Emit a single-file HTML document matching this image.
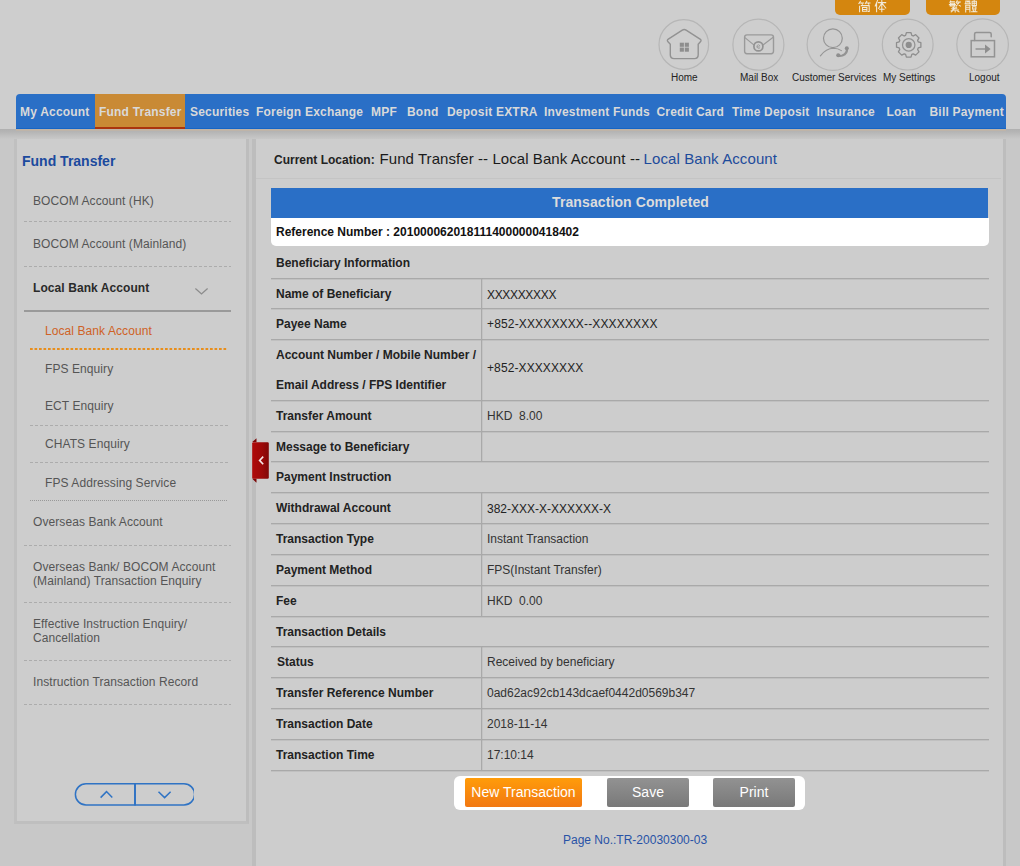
<!DOCTYPE html>
<html><head><meta charset="utf-8">
<style>
*{margin:0;padding:0;box-sizing:border-box}
html,body{width:1020px;height:866px;overflow:hidden;background:#c8c8c8;font-family:"Liberation Sans",sans-serif;position:relative}
.a{position:absolute;white-space:nowrap}
.lang{position:absolute;top:0;height:15px;background:#d4860f;border-radius:0 0 5px 5px}
.ic{position:absolute;top:19px;width:51px;height:51px;border:1px solid #b4b4b4;border-radius:50%}
.ilbl{position:absolute;top:72px;font-size:10px;line-height:12px;color:#222;text-align:center}
#nav{position:absolute;left:16px;top:94px;width:990px;height:35px;background:#2a6fc6;border-bottom:1px solid #1565c6;border-radius:4px 4px 0 0}
.nv{position:absolute;top:105px;font-size:12px;line-height:14px;font-weight:bold;color:#d9d9d9;letter-spacing:0.2px}
#shade{position:absolute;left:0;top:129px;width:1020px;height:10px;background:linear-gradient(#b0b0b0 0,#b4b4b4 25%,#bcbcbc 55%,#c8c8c8 100%)}
#tan{position:absolute;left:16px;top:129px;width:990px;height:1.5px;background:#bfb4a8}
#left{position:absolute;left:14px;top:139px;width:235px;height:685px;background:#cdcdcd;border-left:3px solid #c0c0c0;border-right:3px solid #bdbdbd;border-bottom:3px solid #bfbfbf}
#main{position:absolute;left:252px;top:139px;width:754px;height:727px;background:#cdcdcd;border-left:4px solid #bdbdbd;border-right:3px solid #bdbdbd}
.sb{position:absolute;font-size:12px;line-height:14px;color:#555;letter-spacing:0.08px}
.dash{position:absolute;height:1px;background-image:linear-gradient(to right,#acacac 60%,transparent 60%);background-size:5px 1px}
.lbl{position:absolute;left:276px;font-size:12px;line-height:14px;font-weight:bold;color:#222}
.val{position:absolute;left:487px;font-size:12px;line-height:14px;color:#333}
.hl{position:absolute;left:271px;width:718px;height:1px;background:#a9a9a9;box-shadow:0 0.7px 0 rgba(165,165,165,0.45)}
.vl{position:absolute;left:481px;width:1px;background:#a9a9a9;box-shadow:0.6px 0 0 rgba(165,165,165,0.4)}
</style></head><body>

<div class="a" style="left:0;top:0;width:1020px;height:129px;background:#cecece"></div>
<!-- language buttons -->
<div class="lang" style="left:835px;width:75px"></div>
<div class="lang" style="left:926px;width:74px"></div>

<svg class="a" style="left:840px;top:0" width="180" height="16" viewBox="840 0 180 16">
<g fill="none" stroke="#f2ead9" stroke-width="1.05" stroke-linecap="square">
<path d="M858.9,3.6 L860.4,1.3 M859.6,2.9 L863.5,2.9 M861.6,3 L862.4,4.2 M865.3,3.6 L866.8,1.3 M866,2.9 L870,2.9 M868,3 L868.8,4.2"/>
<path d="M859.6,6.3 L859.6,11.8 M861.3,5.6 L869.2,5.6 L869.2,11.5 L868.3,11.5 M862.5,7.5 L866.9,7.5 L866.9,11.3 L862.5,11.3 Z M862.5,9.4 L866.9,9.4"/>
<path d="M877.5,0.6 L875.2,6 M876.6,3.8 L876.6,11.8 M878.3,2.6 L885.7,2.6 M881.8,0.5 L881.8,11.8 M881.5,3.4 L878.5,8.4 M882.1,3.4 L885.8,8 M879.6,9.3 L884.1,9.3"/>
<path d="M950.6,1 L949.9,2.4 M950.5,1.8 L954.4,1.8 M950.4,3.2 L954.6,3.2 L954.3,6 M950.6,3.2 L950.6,6 M949.4,4.6 L955.4,4.6 M950.2,6 L954.8,6 M957.2,0.8 L956.2,2.8 M956.7,2 L960.4,2 M959.3,2.2 L956.2,6.1 M957.2,3.6 L960.4,6.1"/>
<path d="M954.2,6.8 L952.2,8.3 L956.8,8.3 M956.2,7.5 L952,10.1 L958.4,9.9 M955.2,9.9 L955.2,12 M952.6,10.9 L951.2,11.9 M957.4,10.9 L959,11.9"/>
<path d="M965.8,1 L969.8,1 L969.8,3 M965.8,1 L965.8,3 M967.3,2 L968.6,2 M965.1,3.8 L970.4,3.8 M965.7,5.2 L965.7,11.9 M965.7,5.2 L969.9,5.2 L969.9,11.9 M966.6,7.3 L969.1,7.3 M966.6,9.3 L969.1,9.3"/>
<path d="M972.1,1.2 L976.4,1.2 L976.4,5.4 L972.1,5.4 Z M974.2,0.6 L974.2,5.4 M972.1,3.3 L976.4,3.3 M972.6,6.8 L975.9,6.8 L975.9,9 L972.6,9 Z M973.1,10.1 L973.5,11 M975.4,10.1 L975,11 M971.6,11.8 L976.9,11.8"/>
</g></svg>
<!-- icons -->
<svg class="a" style="left:0;top:0" width="1020" height="92" viewBox="0 0 1020 92">
<g fill="none" stroke="#b6b6b6" stroke-width="1.2">
<circle cx="683.8" cy="44.5" r="24.8"/>
<circle cx="758.4" cy="44.7" r="25.5"/>
<circle cx="832.9" cy="44.6" r="25.8"/>
<circle cx="907.7" cy="44.6" r="25.4"/>
<circle cx="982.6" cy="44.6" r="25.8"/>
</g>
<g fill="none" stroke="#939393" stroke-width="1.6" stroke-linejoin="round" stroke-linecap="round">
<path d="M670.3,44.3 L668,41.8 Q666.6,40.3 668.3,39.2 L682.3,30.1 Q684.2,28.9 686.1,30.1 L700.1,39.2 Q701.8,40.3 700.4,41.8 L698.2,44.3 L698.2,54.8 Q698.2,58.6 694.4,58.6 L674.1,58.6 Q670.3,58.6 670.3,54.8 Z" stroke="#929292" stroke-width="1.4"/>
<rect x="744.6" y="34.9" width="28.9" height="18.8" rx="2.4" stroke="#9a9a9a" stroke-width="1.4"/>
<path d="M744.9,37.6 L753.8,44.9 M773.2,37.3 L763,44.9" stroke="#9a9a9a" stroke-width="1.2"/>
<circle cx="758.4" cy="46.4" r="4.5" stroke="#929292" stroke-width="1.7"/>
<path d="M756.9,46.9 L759.3,46.9 M759.9,45.6 Q758.6,43.9 757.2,45.4 Q756.5,47.6 758.2,48.3 Q759.3,48.6 759.9,47.9" stroke="#9a9a9a" stroke-width="0.9"/>
<circle cx="832.9" cy="38.3" r="9.4" stroke-width="1.2" stroke="#959595"/>
<path d="M820.4,55.8 Q826,48.3 833.5,48.2 Q838.2,48.3 841.4,50.6" stroke-width="1.1" stroke="#959595"/>
<path d="M846.9,48.4 Q847.6,53.6 842.4,55.5 Q839.8,56.2 838,55.5" stroke-width="2.3"/>
<path d="M905.61,35.39 L906.38,32.72 L911.02,32.72 L911.79,35.39 A10.0,10.0 0 0 1 913.24,35.99 L915.67,34.64 L918.96,37.93 L917.61,40.36 A10.0,10.0 0 0 1 918.21,41.81 L920.88,42.58 L920.88,47.22 L918.21,47.99 A10.0,10.0 0 0 1 917.61,49.44 L918.96,51.87 L915.67,55.16 L913.24,53.81 A10.0,10.0 0 0 1 911.79,54.41 L911.02,57.08 L906.38,57.08 L905.61,54.41 A10.0,10.0 0 0 1 904.16,53.81 L901.73,55.16 L898.44,51.87 L899.79,49.44 A10.0,10.0 0 0 1 899.19,47.99 L896.52,47.22 L896.52,42.58 L899.19,41.81 A10.0,10.0 0 0 1 899.79,40.36 L898.44,37.93 L901.73,34.64 L904.16,35.99 A10.0,10.0 0 0 1 905.61,35.39Z" stroke-width="1.3" stroke="#8e8e8e"/>
<circle cx="908.7" cy="44.9" r="6.2" stroke-width="1.3"/>
<rect x="971.2" y="40.6" width="23.3" height="16.2" stroke-width="1.5" stroke-linejoin="miter"/>
<path d="M974.6,40.6 L974.6,34 Q974.6,32.6 976.2,32.6 L989.6,32.6 Q991.2,32.6 991.2,34 L991.2,36.8" stroke-width="1.5"/>
<path d="M976,49 L986,49" stroke-width="1.3"/>
</g>
<g fill="#8e8e8e">
<rect x="679.8" y="42.7" width="4.1" height="4.1"/><rect x="684.8" y="42.7" width="4.1" height="4.1"/>
<rect x="679.8" y="47.6" width="4.1" height="4.1"/><rect x="684.8" y="47.6" width="4.1" height="4.1"/>
<circle cx="908.7" cy="44.9" r="3.1"/>
<circle cx="838.2" cy="55.2" r="2"/><circle cx="846.8" cy="48.2" r="2"/>
<path d="M985,44.6 L990.6,49 L985,53.4Z"/>
</g>
</svg>
<div class="ilbl a" style="left:671px">Home</div>
<div class="ilbl a" style="left:740px">Mail Box</div>
<div class="ilbl a" style="left:792px">Customer Services</div>
<div class="ilbl a" style="left:883px">My Settings</div>
<div class="ilbl a" style="left:969px">Logout</div>

<!-- nav -->
<div id="nav"></div>
<div class="a" style="left:95px;top:94px;width:90px;height:35px;background:#c98a35;border-bottom:2px solid #aa340e"></div>
<div class="nv a" style="left:20px">My Account</div>
<div class="nv a" style="left:99px">Fund Transfer</div>
<div class="nv a" style="left:190px">Securities</div>
<div class="nv a" style="left:256px">Foreign Exchange</div>
<div class="nv a" style="left:371px">MPF</div>
<div class="nv a" style="left:407px">Bond</div>
<div class="nv a" style="left:447px">Deposit EXTRA</div>
<div class="nv a" style="left:544px">Investment Funds</div>
<div class="nv a" style="left:656.5px">Credit Card</div>
<div class="nv a" style="left:732px">Time Deposit</div>
<div class="nv a" style="left:816.5px">Insurance</div>
<div class="nv a" style="left:886.5px">Loan</div>
<div class="nv a" style="left:929.5px">Bill Payment</div>
<div id="shade"></div><div id="tan"></div>

<!-- left panel -->
<div id="left"></div>
<div class="a" style="left:22px;top:153px;font-size:14px;line-height:16px;font-weight:bold;color:#1b4a9e">Fund Transfer</div>
<div class="sb a" style="left:33px;top:194px">BOCOM Account (HK)</div>
<div class="dash" style="left:24px;top:221px;width:207px"></div>
<div class="sb a" style="left:33px;top:237px">BOCOM Account (Mainland)</div>
<div class="dash" style="left:24px;top:266px;width:207px"></div>
<div class="sb a" style="left:33px;top:281px;font-weight:bold;color:#2a2a2a">Local Bank Account</div>
<div class="a" style="left:24px;top:310px;width:207px;height:2px;background:#9a9a9a"></div>
<div class="sb a" style="left:45px;top:324px;color:#cf6226">Local Bank Account</div>
<div class="dash" style="left:30px;top:348px;width:198px;height:2px;background-image:linear-gradient(to right,#e88e1c 66%,transparent 66%);background-size:4.5px 2px"></div>
<div class="sb a" style="left:45px;top:362px">FPS Enquiry</div>
<div class="sb a" style="left:45px;top:399px">ECT Enquiry</div>
<div class="dash" style="left:30px;top:425px;width:198px"></div>
<div class="sb a" style="left:45px;top:437px">CHATS Enquiry</div>
<div class="dash" style="left:30px;top:462px;width:198px"></div>
<div class="sb a" style="left:45px;top:476px">FPS Addressing Service</div>
<div class="dash" style="left:30px;top:500px;width:198px;background-size:2px 1px;background-image:linear-gradient(to right,#999 50%,transparent 50%)"></div>
<div class="sb a" style="left:33px;top:515px">Overseas Bank Account</div>
<div class="dash" style="left:24px;top:545px;width:207px"></div>
<div class="sb a" style="left:33px;top:560px">Overseas Bank/ BOCOM Account</div>
<div class="sb a" style="left:33px;top:574px">(Mainland) Transaction Enquiry</div>
<div class="dash" style="left:24px;top:602px;width:207px"></div>
<div class="sb a" style="left:33px;top:617px">Effective Instruction Enquiry/</div>
<div class="sb a" style="left:33px;top:631px">Cancellation</div>
<div class="dash" style="left:24px;top:660px;width:207px"></div>
<div class="sb a" style="left:33px;top:675px">Instruction Transaction Record</div>
<div class="dash" style="left:24px;top:704px;width:207px"></div>

<!-- main panel -->
<div id="main"></div>

<div class="a" style="left:274px;top:153px;font-size:12px;line-height:14px;font-weight:bold;color:#222">Current Location:</div>
<div class="a" style="left:379.5px;top:150px;font-size:15px;line-height:17px;color:#1a1a1a;letter-spacing:0.07px">Fund Transfer -- Local Bank Account</div>
<div class="a" style="left:630px;top:150px;font-size:15px;line-height:17px;color:#1a1a1a">--</div>
<div class="a" style="left:643.5px;top:150px;font-size:15px;line-height:17px;color:#1d4b9b;letter-spacing:0.1px">Local Bank Account</div>
<div class="a" style="left:256px;top:178px;width:745px;height:1px;background:#c4c4c4"></div>
<div class="a" style="left:271px;top:188px;width:717px;height:30px;background:#2a6fc6"></div>
<div class="a" style="left:272px;top:194px;width:717px;text-align:center;font-size:14px;line-height:17px;font-weight:bold;color:#dcdcdc;letter-spacing:0.1px">Transaction Completed</div>
<div class="a" style="left:271px;top:218px;width:718px;height:28px;background:#fff;border-radius:0 0 5px 5px"></div>
<div class="lbl a" style="top:225px;color:#111">Reference Number : 2010000620181114000000418402</div>
<div class="lbl a" style="top:256px">Beneficiary Information</div>
<div class="hl" style="top:278px"></div>
<div class="lbl a" style="top:287px">Name of Beneficiary</div>
<div class="val a" style="top:288px;letter-spacing:-0.33px;color:#222">XXXXXXXXX</div>
<div class="vl" style="top:278px;height:30px"></div>
<div class="hl" style="top:308px"></div>
<div class="lbl a" style="top:317px">Payee Name</div>
<div class="val a" style="top:316.5px;letter-spacing:0.15px;color:#222">+852-XXXXXXXX--XXXXXXXX</div>
<div class="vl" style="top:308px;height:31px"></div>
<div class="hl" style="top:339px"></div>
<div class="lbl a" style="top:348px">Account Number / Mobile Number /</div>
<div class="lbl a" style="top:378px">Email Address / FPS Identifier</div>
<div class="val a" style="top:361px;letter-spacing:0.1px;color:#222">+852-XXXXXXXX</div>
<div class="vl" style="top:339px;height:61px"></div>
<div class="hl" style="top:400px"></div>
<div class="lbl a" style="top:409px">Transfer Amount</div>
<div class="val a" style="top:409px">HKD&nbsp; 8.00</div>
<div class="vl" style="top:400px;height:31px"></div>
<div class="hl" style="top:431px"></div>
<div class="lbl a" style="top:440px">Message to Beneficiary</div>
<div class="val a" style="top:440px"></div>
<div class="vl" style="top:431px;height:30px"></div>
<div class="hl" style="top:461px"></div>
<div class="lbl a" style="top:470px">Payment Instruction</div>
<div class="hl" style="top:492px"></div>
<div class="lbl a" style="top:501px">Withdrawal Account</div>
<div class="val a" style="top:502px;color:#222">382-XXX-X-XXXXXX-X</div>
<div class="vl" style="top:492px;height:31px"></div>
<div class="hl" style="top:523px"></div>
<div class="lbl a" style="top:532px">Transaction Type</div>
<div class="val a" style="top:532px">Instant Transaction</div>
<div class="vl" style="top:523px;height:31px"></div>
<div class="hl" style="top:554px"></div>
<div class="lbl a" style="top:563px">Payment Method</div>
<div class="val a" style="top:563px">FPS(Instant Transfer)</div>
<div class="vl" style="top:554px;height:31px"></div>
<div class="hl" style="top:585px"></div>
<div class="lbl a" style="top:594px">Fee</div>
<div class="val a" style="top:594px">HKD&nbsp; 0.00</div>
<div class="vl" style="top:585px;height:31px"></div>
<div class="hl" style="top:616px"></div>
<div class="lbl a" style="top:625px">Transaction Details</div>
<div class="hl" style="top:646px"></div>
<div class="lbl a" style="top:655px;left:277px">Status</div>
<div class="val a" style="top:655px">Received by beneficiary</div>
<div class="vl" style="top:646px;height:31px"></div>
<div class="hl" style="top:677px"></div>
<div class="lbl a" style="top:686px">Transfer Reference Number</div>
<div class="val a" style="top:686px">0ad62ac92cb143dcaef0442d0569b347</div>
<div class="vl" style="top:677px;height:31px"></div>
<div class="hl" style="top:708px"></div>
<div class="lbl a" style="top:717px">Transaction Date</div>
<div class="val a" style="top:717px">2018-11-14</div>
<div class="vl" style="top:708px;height:31px"></div>
<div class="hl" style="top:739px"></div>
<div class="lbl a" style="top:748px">Transaction Time</div>
<div class="val a" style="top:748px">17:10:14</div>
<div class="vl" style="top:739px;height:31px"></div>
<div class="hl" style="top:770px"></div>
<div class="a" style="left:454px;top:776px;width:351px;height:34px;background:#fff;border-radius:6px"></div>
<div class="a" style="left:465px;top:778px;width:117px;height:29px;background:linear-gradient(#ff9c0a,#f27812);border-radius:2px;color:#fff;font-size:14px;line-height:28px;text-align:center">New Transaction</div>
<div class="a" style="left:607px;top:778px;width:82px;height:29px;background:linear-gradient(#929292,#797979);border-radius:2px;color:#fff;font-size:14px;line-height:28px;text-align:center">Save</div>
<div class="a" style="left:713px;top:778px;width:82px;height:29px;background:linear-gradient(#929292,#797979);border-radius:2px;color:#fff;font-size:14px;line-height:28px;text-align:center">Print</div>
<div class="a" style="left:563px;top:833px;font-size:12px;line-height:14px;color:#2852a6">Page No.:TR-20030300-03</div>

<!-- collapse tab -->
<svg class="a" style="left:250px;top:436px" width="22" height="50" viewBox="250 436 22 50">
<defs><linearGradient id="rg" x1="0" x2="1"><stop offset="0" stop-color="#b00a0a"/><stop offset="0.6" stop-color="#9c0a0a"/><stop offset="1" stop-color="#800808"/></linearGradient></defs>
<path d="M252.2,442 L256.5,438.2 L256.5,442Z M252.2,478.8 L256.5,482.8 L256.5,478.8Z" fill="#7a0606"/>
<rect x="252.2" y="442.2" width="16.6" height="36.6" rx="1.2" fill="url(#rg)"/>
<path d="M263.2,456.6 L259.6,460.4 L263.2,464.2" fill="none" stroke="#f4e8e8" stroke-width="1.6"/>
</svg>
<!-- up/down pill -->
<svg class="a" style="left:70px;top:778px" width="123.8" height="32" viewBox="70 778 123.8 32">
<path d="M135,783.8 L86,783.8 A10.6,10.6 0 0 0 86,805 L135,805 Z M135,783.8 L184,783.8 A10.6,10.6 0 0 1 184,805 L135,805" fill="none" stroke="#2f73c4" stroke-width="1.5"/>
<path d="M135,783.6 L135,805.4" stroke="#2f73c4" stroke-width="1.8"/>
<path d="M100.6,797.6 L106.5,791.6 L112.3,797.6" fill="none" stroke="#2f73c4" stroke-width="1.5"/>
<path d="M158.5,791.8 L164.6,797.6 L170.6,791.8" fill="none" stroke="#2f73c4" stroke-width="1.5"/>
</svg>
<!-- sidebar chevron -->
<svg class="a" style="left:190px;top:282px" width="22" height="16" viewBox="190 282 22 16">
<path d="M195.4,288.6 L201.5,294 L207.6,288.6" fill="none" stroke="#8c8c8c" stroke-width="1.3"/>
</svg>
</body></html>
